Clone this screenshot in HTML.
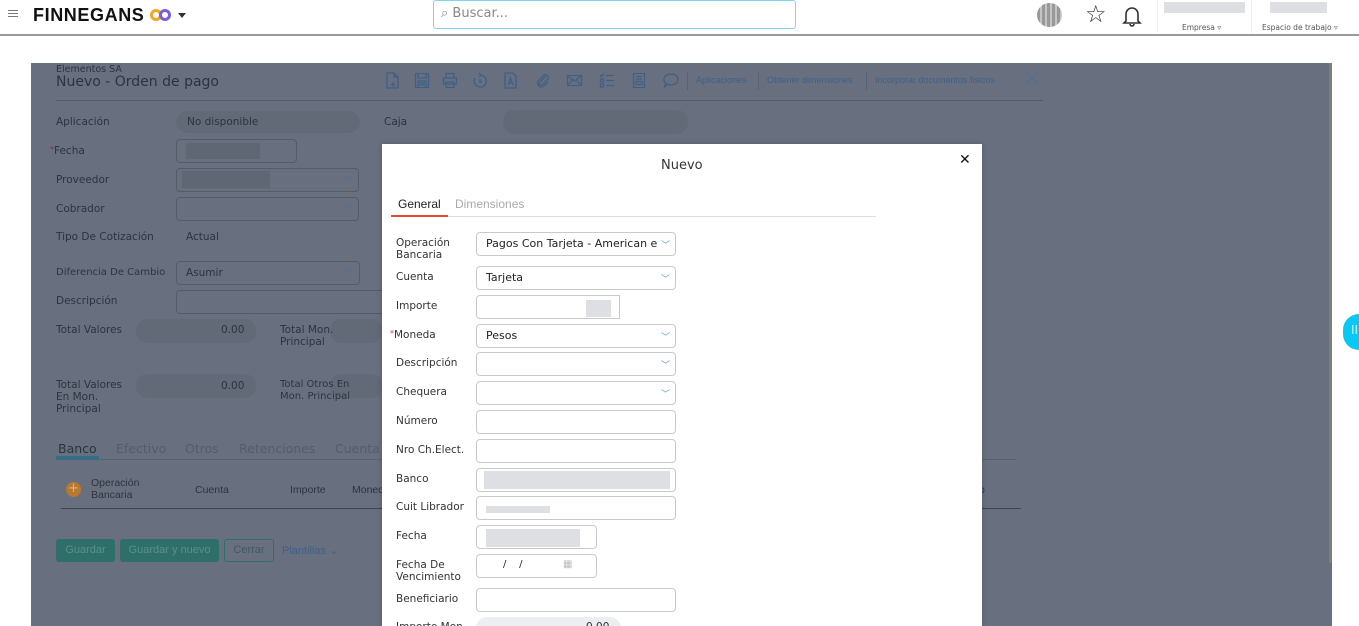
<!DOCTYPE html>
<html><head><meta charset="utf-8"><style>
*{box-sizing:border-box;margin:0;padding:0}
html,body{width:1359px;height:626px;overflow:hidden}
body{background:#fff;font-family:"DejaVu Sans","Liberation Sans",sans-serif;position:relative}
.a{position:absolute}
.t{font-size:10.5px;color:#2d333d;position:absolute}
.pill{position:absolute;background:#636a77;border-radius:11px;height:22px}
.din{position:absolute;border:1px solid #555c68;border-radius:4px;height:24px}
.chev{position:absolute;right:5px;top:5px;font-size:9px;color:#4d6f95}
.ml{position:absolute;font-size:10.5px;color:#333;left:14px}
.mi{position:absolute;left:94px;width:200px;height:24px;border:1px solid #c9c9c9;border-radius:4px;font-size:11px;color:#222;padding:4px 9px}
.mc{position:absolute;right:5px;top:5px;color:#5b9bd5;font-size:9px}
.blur{position:absolute;background:#dedfe3}
.ic{position:absolute;top:72px}
.ic *{fill:none;stroke:#3f5f87;stroke-width:1.3}
</style></head><body>
<!-- header -->
<div class="a" style="left:0;top:0;width:1359px;height:36px;background:#fff;border-bottom:2px solid #9a9a9a"></div>
<div class="a" style="left:8px;top:10px;width:10px;height:1px;background:#777;box-shadow:0 3px 0 #777,0 6px 0 #777"></div>
<div class="a" style="left:33px;top:5px;font-family:'Liberation Sans',sans-serif;font-weight:bold;font-size:18px;letter-spacing:0.6px;color:#111">FINNEGANS</div>
<svg class="a" style="left:149px;top:8px" width="24" height="14"><circle cx="7" cy="7" r="4.5" fill="none" stroke="#f5a623" stroke-width="3"/><circle cx="16" cy="7" r="4.5" fill="none" stroke="#7b5fd6" stroke-width="3"/></svg>
<div class="a" style="left:178px;top:13px;width:0;height:0;border-left:4px solid transparent;border-right:4px solid transparent;border-top:5px solid #333"></div>
<div class="a" style="left:433px;top:0;width:363px;height:29px;border:1px solid #7fd6ee;border-radius:3px"></div>
<div class="a" style="left:441px;top:6px;font-size:13px;color:#888">⌕ Buscar...</div>
<div class="a" style="left:1037px;top:3px;width:25px;height:24px;border-radius:50%;background:repeating-linear-gradient(90deg,#999 0 3px,#c5c5c5 3px 5px)"></div>
<div class="a" style="left:1085px;top:1px;font-size:24px;color:#333;line-height:26px">☆</div>
<svg class="a" style="left:1122px;top:5px" width="20" height="22"><path d="M4 16 V9 a6 6 0 0 1 12 0 V16 L18 18 H2 Z M8 19 a2 2 0 0 0 4 0" fill="none" stroke="#333" stroke-width="1.6"/></svg>
<div class="a" style="left:1157px;top:0;width:1px;height:33px;background:#eee"></div>
<div class="a" style="left:1251px;top:0;width:1px;height:33px;background:#eee"></div>
<div class="blur" style="left:1164px;top:2px;width:81px;height:11px"></div>
<div class="blur" style="left:1270px;top:2px;width:57px;height:11px"></div>
<div class="a" style="left:1182px;top:23px;font-size:7.5px;color:#555">Empresa ▿</div>
<div class="a" style="left:1262px;top:23px;font-size:7.5px;color:#555">Espacio de trabajo ▿</div>
<!-- overlay page -->
<div class="a" style="left:31px;top:63px;width:1301px;height:563px;background:#687080"></div>
<div class="a" style="left:1329px;top:63px;width:3px;height:500px;background:#7d8076"></div>
<div class="a" style="left:1343px;top:314px;width:32px;height:36px;border-radius:18px;background:#08c8f5"></div>
<div class="a" style="left:1351px;top:323px;color:#c7f1ff;font-size:12px">II</div>
<div class="t" style="left:56px;top:64px;font-size:9.5px">Elementos SA</div>
<div class="t" style="left:56px;top:74px;font-size:14px">Nuevo - Orden de pago</div>
<div class="a" style="left:56px;top:100px;width:987px;height:1px;background:#555c68"></div>
<svg class="ic" style="left:385px" width="16" height="17"><path d="M2 1 H9 L13 5 V16 H2 Z M9 1 V5 H13 M8 10 V15 M5.5 12.5 H10.5"/></svg>
<svg class="ic" style="left:414px" width="16" height="17"><path d="M1.5 1.5 H14.5 V15.5 H1.5 Z M4 1.5 V6 H12 V1.5 M4 9 H12 V15.5 H4 Z M5 11 H11 M5 13 H11"/></svg>
<svg class="ic" style="left:442px" width="16" height="17"><path d="M4 6 V1.5 H12 V6 M1.5 6 H14.5 V12 H1.5 Z M4 10 H12 V15.5 H4 Z"/></svg>
<svg class="ic" style="left:472px" width="16" height="17"><path d="M7 1 L9 3 L7 5 M8 3 A6 6 0 1 1 3 6 M8 7 V10 H10"/></svg>
<svg class="ic" style="left:503px" width="16" height="17"><path d="M2 1 H10 L13 4 V16 H2 Z M5 13 L7.5 6 L10 13 M6 11 H9"/></svg>
<svg class="ic" style="left:535px" width="16" height="17"><path d="M11 4 L4.5 10.5 A1.8 1.8 0 0 0 7 13 L13 7 A3 3 0 0 0 9 3 L3 9 A4 4 0 0 0 8.5 14.5 L13 10"/></svg>
<svg class="ic" style="left:566px" width="17" height="17"><path d="M1.5 3.5 H15.5 V13.5 H1.5 Z M1.5 3.5 L8.5 9 L15.5 3.5 M1.5 13.5 L6.5 8 M15.5 13.5 L10.5 8"/></svg>
<svg class="ic" style="left:599px" width="16" height="17"><path d="M1 3 L2.5 4.5 L5 1.5 M1.5 7 H4.5 V10 H1.5 Z M1.5 12 H4.5 V15 H1.5 Z M7 3.5 H15 M7 8.5 H15 M7 13.5 H15"/></svg>
<svg class="ic" style="left:631px" width="16" height="17"><path d="M2.5 1.5 H13.5 V15.5 H2.5 Z M5 4.5 H11 M5 7 H11 M5 9.5 H11 V12.5 H5 Z"/></svg>
<svg class="ic" style="left:662px" width="17" height="17"><path d="M8.5 2 A7 5.5 0 1 1 5 12 L2.5 15.5 L3.5 11 A7 5.5 0 0 1 8.5 2 Z"/></svg>
<div class="a" style="left:687px;top:72px;width:1px;height:18px;background:#5a6170"></div>
<div class="t" style="left:696px;top:75px;font-size:9px;color:#3f5f87;font-family:'Liberation Sans'">Aplicaciones</div>
<div class="a" style="left:758px;top:72px;width:1px;height:18px;background:#5a6170"></div>
<div class="t" style="left:767px;top:75px;font-size:9px;color:#3f5f87;font-family:'Liberation Sans'">Obtener dimensiones</div>
<div class="a" style="left:866px;top:72px;width:1px;height:18px;background:#5a6170"></div>
<div class="t" style="left:875px;top:75px;font-size:9px;color:#3f5f87;font-family:'Liberation Sans'">Incorporar documentos fisicos</div>
<svg class="a" style="left:1025px;top:71px" width="14" height="14"><path d="M1 1 L13 13 M13 1 L1 13" stroke="#4d6f95" stroke-width="1.2"/></svg>

<div class="pill" style="left:176px;top:111px;width:184px"></div>
<div class="t" style="left:56px;top:116px">Aplicación</div>
<div class="t" style="left:187px;top:116px">No disponible</div>
<div class="t" style="left:384px;top:116px">Caja</div>
<div class="pill" style="left:503px;top:110px;width:185px;height:24px"></div>
<div class="t" style="left:50px;top:145px"><span style="color:#8a2a2a;font-size:8px;vertical-align:top">*</span>Fecha</div>
<div class="din" style="left:176px;top:139px;width:121px"></div>
<div class="a" style="left:186px;top:143px;width:74px;height:16px;background:#5f6674"></div>
<div class="t" style="left:56px;top:174px">Proveedor</div>
<div class="din" style="left:176px;top:168px;width:183px"><span class="chev">﹀</span></div>
<div class="a" style="left:182px;top:171px;width:88px;height:17px;background:#5f6674"></div>
<div class="t" style="left:56px;top:203px">Cobrador</div>
<div class="din" style="left:176px;top:197px;width:183px"><span class="chev">﹀</span></div>
<div class="t" style="left:56px;top:231px">Tipo De Cotización</div>
<div class="t" style="left:186px;top:231px">Actual</div>
<div class="t" style="left:56px;top:267px;font-size:10px">Diferencia De Cambio</div>
<div class="din" style="left:176px;top:261px;width:184px"><span class="chev">﹀</span></div>
<div class="t" style="left:186px;top:267px">Asumir</div>
<div class="t" style="left:56px;top:295px">Descripción</div>
<div class="din" style="left:176px;top:290px;width:210px"></div>
<div class="pill" style="left:136px;top:319px;width:120px;height:24px"></div>
<div class="pill" style="left:330px;top:319px;width:52px;height:24px"></div>
<div class="pill" style="left:136px;top:374px;width:120px;height:24px"></div>
<div class="pill" style="left:330px;top:374px;width:52px;height:24px"></div>
<div class="t" style="left:56px;top:324px">Total Valores</div>
<div class="t" style="left:221px;top:324px">0.00</div>
<div class="t" style="left:280px;top:324px;line-height:12px">Total Mon.<br>Principal</div>
<div class="t" style="left:56px;top:379px;line-height:12px">Total Valores<br>En Mon.<br>Principal</div>
<div class="t" style="left:221px;top:380px">0.00</div>
<div class="t" style="left:280px;top:379px;line-height:12px;font-size:10px">Total Otros En<br>Mon. Principal</div>

<div class="t" style="left:58px;top:441px;font-size:12.5px">Banco</div>
<div class="t" style="left:116px;top:441px;font-size:12.5px;color:#555c68">Efectivo</div>
<div class="t" style="left:185px;top:441px;font-size:12.5px;color:#555c68">Otros</div>
<div class="t" style="left:239px;top:441px;font-size:12.5px;color:#555c68">Retenciones</div>
<div class="t" style="left:335px;top:441px;font-size:12.5px;color:#555c68">Cuenta</div>
<div class="a" style="left:56px;top:456px;width:43px;height:3px;background:#2e6f8a"></div>
<div class="a" style="left:56px;top:459px;width:960px;height:1px;background:#5a6170"></div>
<div class="a" style="left:66px;top:482px;width:15px;height:15px;border-radius:50%;background:#b8792f;color:#d9b77c;font-size:13px;line-height:14px;text-align:center">+</div>
<div class="t" style="left:91px;top:477px;font-family:'Liberation Sans';line-height:12px">Operación<br>Bancaria</div>
<div class="t" style="left:195px;top:484px;font-family:'Liberation Sans'">Cuenta</div>
<div class="t" style="left:290px;top:484px;font-family:'Liberation Sans'">Importe</div>
<div class="t" style="left:352px;top:484px;font-family:'Liberation Sans'">Moneda</div>
<div class="t" style="left:979px;top:484px;font-family:'Liberation Sans'">o</div>
<div class="a" style="left:61px;top:508px;width:960px;height:1px;background:#3e4450"></div>
<div class="a" style="left:56px;top:539px;width:59px;height:23px;background:#2f6f6a;border-radius:3px;color:#5c8f8b;font-family:'Liberation Sans';font-size:11px;text-align:center;line-height:23px">Guardar</div>
<div class="a" style="left:120px;top:539px;width:99px;height:23px;background:#2f6f6a;border-radius:3px;color:#5c8f8b;font-family:'Liberation Sans';font-size:11px;text-align:center;line-height:23px">Guardar y nuevo</div>
<div class="a" style="left:224px;top:539px;width:50px;height:23px;border:1px solid #2f6f6a;border-radius:3px;color:#3d5a5e;font-family:'Liberation Sans';font-size:11px;text-align:center;line-height:21px">Cerrar</div>
<div class="a" style="left:282px;top:544px;color:#3f5f87;font-family:'Liberation Sans';font-size:11px">Plantillas ⌄</div>

<!-- modal -->
<div class="a" style="left:382px;top:144px;width:600px;height:482px;background:#fff;box-shadow:0 0 6px rgba(0,0,0,0.2)">
 <div class="a" style="left:279px;top:14px;font-size:13px;color:#333">Nuevo</div>
 <div class="a" style="left:577px;top:8px;font-size:14px;color:#111;font-weight:bold">✕</div>
 <div class="a" style="left:16px;top:53px;font-size:12px;color:#222;font-family:'Liberation Sans'">General</div>
 <div class="a" style="left:73px;top:53px;font-size:12px;color:#aaa;font-family:'Liberation Sans'">Dimensiones</div>
 <div class="a" style="left:9px;top:72px;width:485px;height:1px;background:#ddd"></div>
 <div class="a" style="left:9px;top:71px;width:57px;height:2px;background:#e24a33"></div>

 <div class="ml" style="top:93px;line-height:12px">Operación<br>Bancaria</div>
 <div class="mi" style="top:88px;white-space:nowrap;overflow:hidden">Pagos Con Tarjeta - American ex<span class="mc" style="background:#fff;padding-left:4px">﹀</span></div>
 <div class="ml" style="top:127px">Cuenta</div>
 <div class="mi" style="top:122px">Tarjeta<span class="mc">﹀</span></div>
 <div class="ml" style="top:156px">Importe</div>
 <div class="mi" style="top:151px;width:144px;border-radius:4px 0 0 4px"></div>
 <div class="blur" style="left:204px;top:156px;width:25px;height:17px"></div>
 <div class="ml" style="top:185px;left:8px"><span style="color:#d33;font-size:8px;vertical-align:top">*</span>Moneda</div>
 <div class="mi" style="top:180px">Pesos<span class="mc">﹀</span></div>
 <div class="ml" style="top:213px">Descripción</div>
 <div class="mi" style="top:208px"><span class="mc">﹀</span></div>
 <div class="ml" style="top:242px">Chequera</div>
 <div class="mi" style="top:237px"><span class="mc">﹀</span></div>
 <div class="ml" style="top:271px">Número</div>
 <div class="mi" style="top:266px"></div>
 <div class="ml" style="top:300px">Nro Ch.Elect.</div>
 <div class="mi" style="top:295px"></div>
 <div class="ml" style="top:329px">Banco</div>
 <div class="mi" style="top:324px"></div>
 <div class="blur" style="left:102px;top:327px;width:186px;height:18px"></div>
 <div class="ml" style="top:357px">Cuit Librador</div>
 <div class="mi" style="top:352px"></div>
 <div class="blur" style="left:104px;top:362px;width:64px;height:7px"></div>
 <div class="ml" style="top:386px">Fecha</div>
 <div class="mi" style="top:381px;width:121px"></div>
 <div class="blur" style="left:104px;top:385px;width:94px;height:18px"></div>
 <div class="ml" style="top:415px;line-height:12px">Fecha De<br>Vencimiento</div>
 <div class="mi" style="top:410px;width:121px;font-size:10px;padding-left:26px">/ &nbsp;&nbsp;&nbsp;/ <span style="position:absolute;left:86px;color:#bbb">▦</span></div>
 <div class="ml" style="top:449px">Beneficiario</div>
 <div class="mi" style="top:444px"></div>
 <div class="ml" style="top:477px">Importe Mon</div>
 <div class="a" style="left:94px;top:473px;width:145px;height:22px;border-radius:11px;background:#eceef1"></div>
 <div class="a" style="left:204px;top:477px;font-size:10.5px;color:#333">0.00</div>
</div>
</body></html>
